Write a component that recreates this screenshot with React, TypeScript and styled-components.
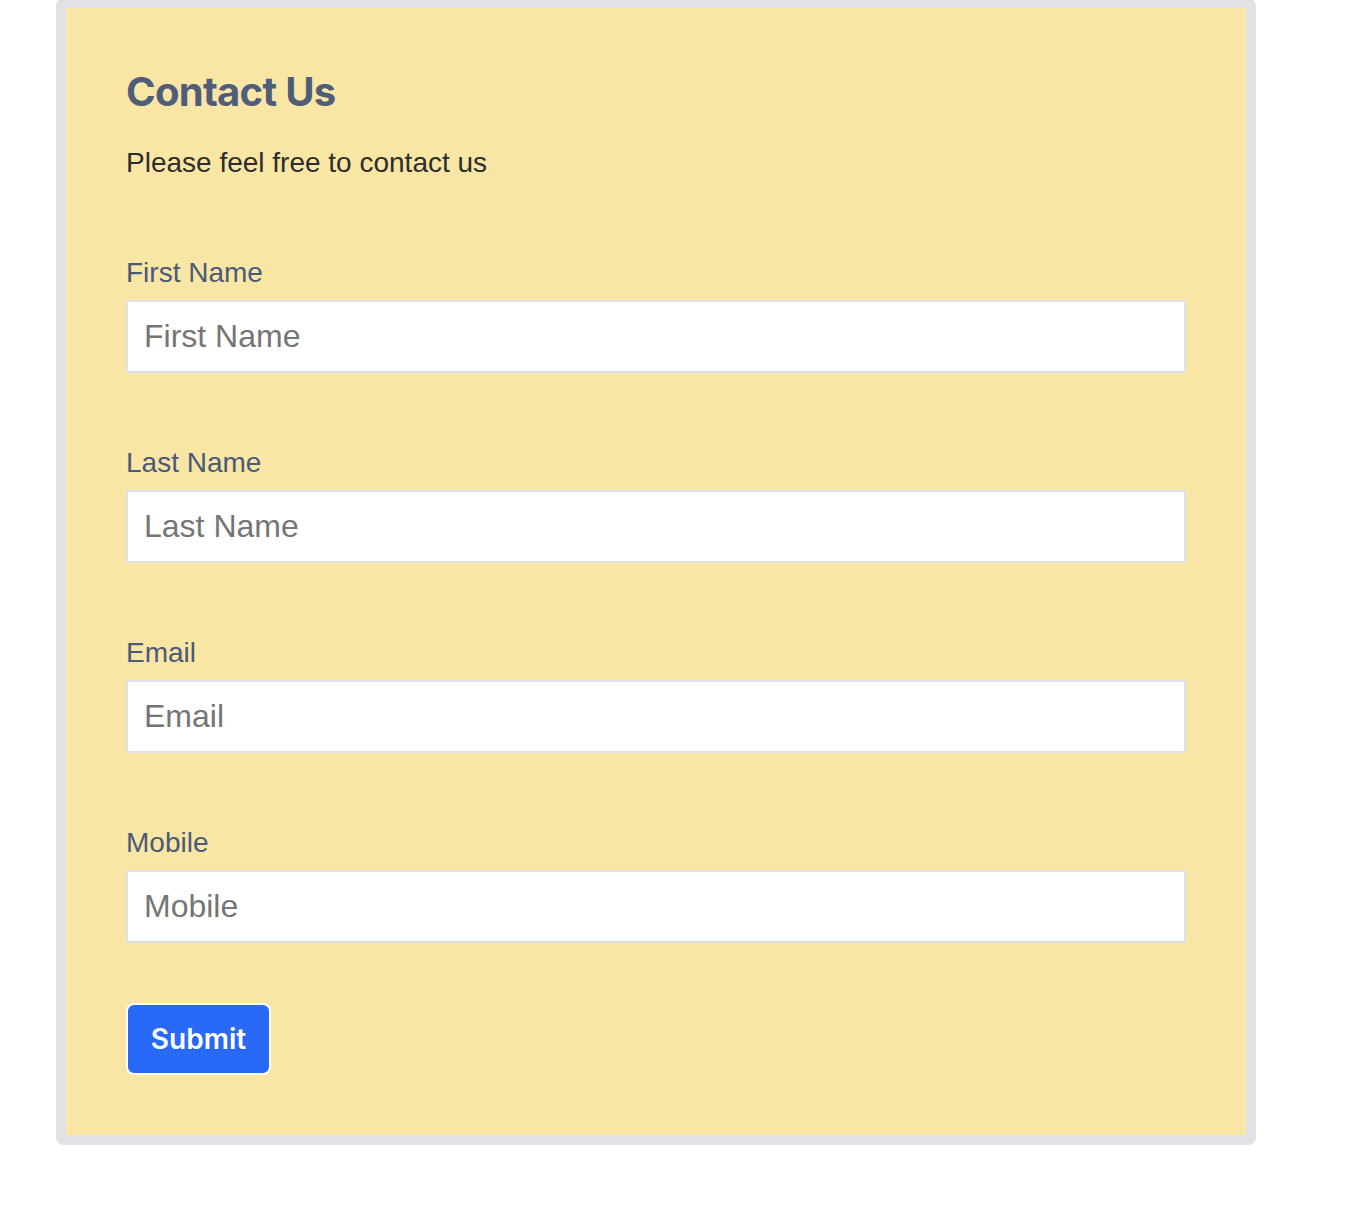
import styled, { createGlobalStyle } from 'styled-components';

const GlobalStyle = createGlobalStyle`
  html, body {
    margin: 0;
    padding: 0;
    background: #ffffff;
  }
  * {
    box-sizing: border-box;
  }
`;

const FIELDS = ['First Name', 'Last Name', 'Email', 'Mobile'];

const Page = styled.div`
  width: 1348px;
  min-height: 1228px;
  padding-left: 56px;
`;

const Card = styled.section`
  width: 1200px;
  margin-top: -2px;
  background-color: #f9e6a5;
  border: 10px solid #e1e1e6;
  border-radius: 8px;
  padding: 60px;
`;

const Title = styled.h2`
  margin: 0;
  font-family: Inter, 'Liberation Sans', sans-serif;
  font-size: 40px;
  line-height: 48px;
  font-weight: 700;
  letter-spacing: -0.7px;
  color: #4f5d7b;
`;

const Intro = styled.p`
  margin: 31px 0 0;
  font-family: 'Liberation Sans', Arial, sans-serif;
  font-size: 28px;
  line-height: 32px;
  color: #2d2d2d;
`;

const Form = styled.form`
  display: flex;
  flex-direction: column;
  gap: 74px;
  margin-top: 78px;
`;

const Field = styled.div`
  display: flex;
  flex-direction: column;
  gap: 12px;
`;

const Label = styled.label`
  font-family: 'Liberation Sans', Arial, sans-serif;
  font-size: 28px;
  line-height: 31px;
  color: #4a5a78;
`;

const Input = styled.input`
  width: 100%;
  height: 73px;
  padding: 0 16px;
  border: 2px solid #dfe1e8;
  border-radius: 0;
  background: #ffffff;
  font-family: 'Liberation Sans', Arial, sans-serif;
  font-size: 32px;
  color: #333;
  outline: none;

  &::placeholder {
    color: #757575;
  }
`;

const Actions = styled.div`
  margin-top: -14px;
`;

const SubmitButton = styled.button`
  width: 145px;
  height: 72px;
  background-color: #2869f8;
  border: 2px solid #ffffff;
  border-radius: 8px;
  color: #ffffff;
  font-family: Inter, 'Liberation Sans', sans-serif;
  font-size: 28px;
  font-weight: 600;
  cursor: pointer;
`;

export default function App() {
  return (
    <Page>
      <GlobalStyle />
      <Card>
        <Title>Contact Us</Title>
        <Intro>Please feel free to contact us</Intro>
        <Form onSubmit={(e) => e.preventDefault()}>
          {FIELDS.map((name) => (
            <Field key={name}>
              <Label>{name}</Label>
              <Input type="text" placeholder={name} />
            </Field>
          ))}
          <Actions>
            <SubmitButton type="submit">Submit</SubmitButton>
          </Actions>
        </Form>
      </Card>
    </Page>
  );
}
